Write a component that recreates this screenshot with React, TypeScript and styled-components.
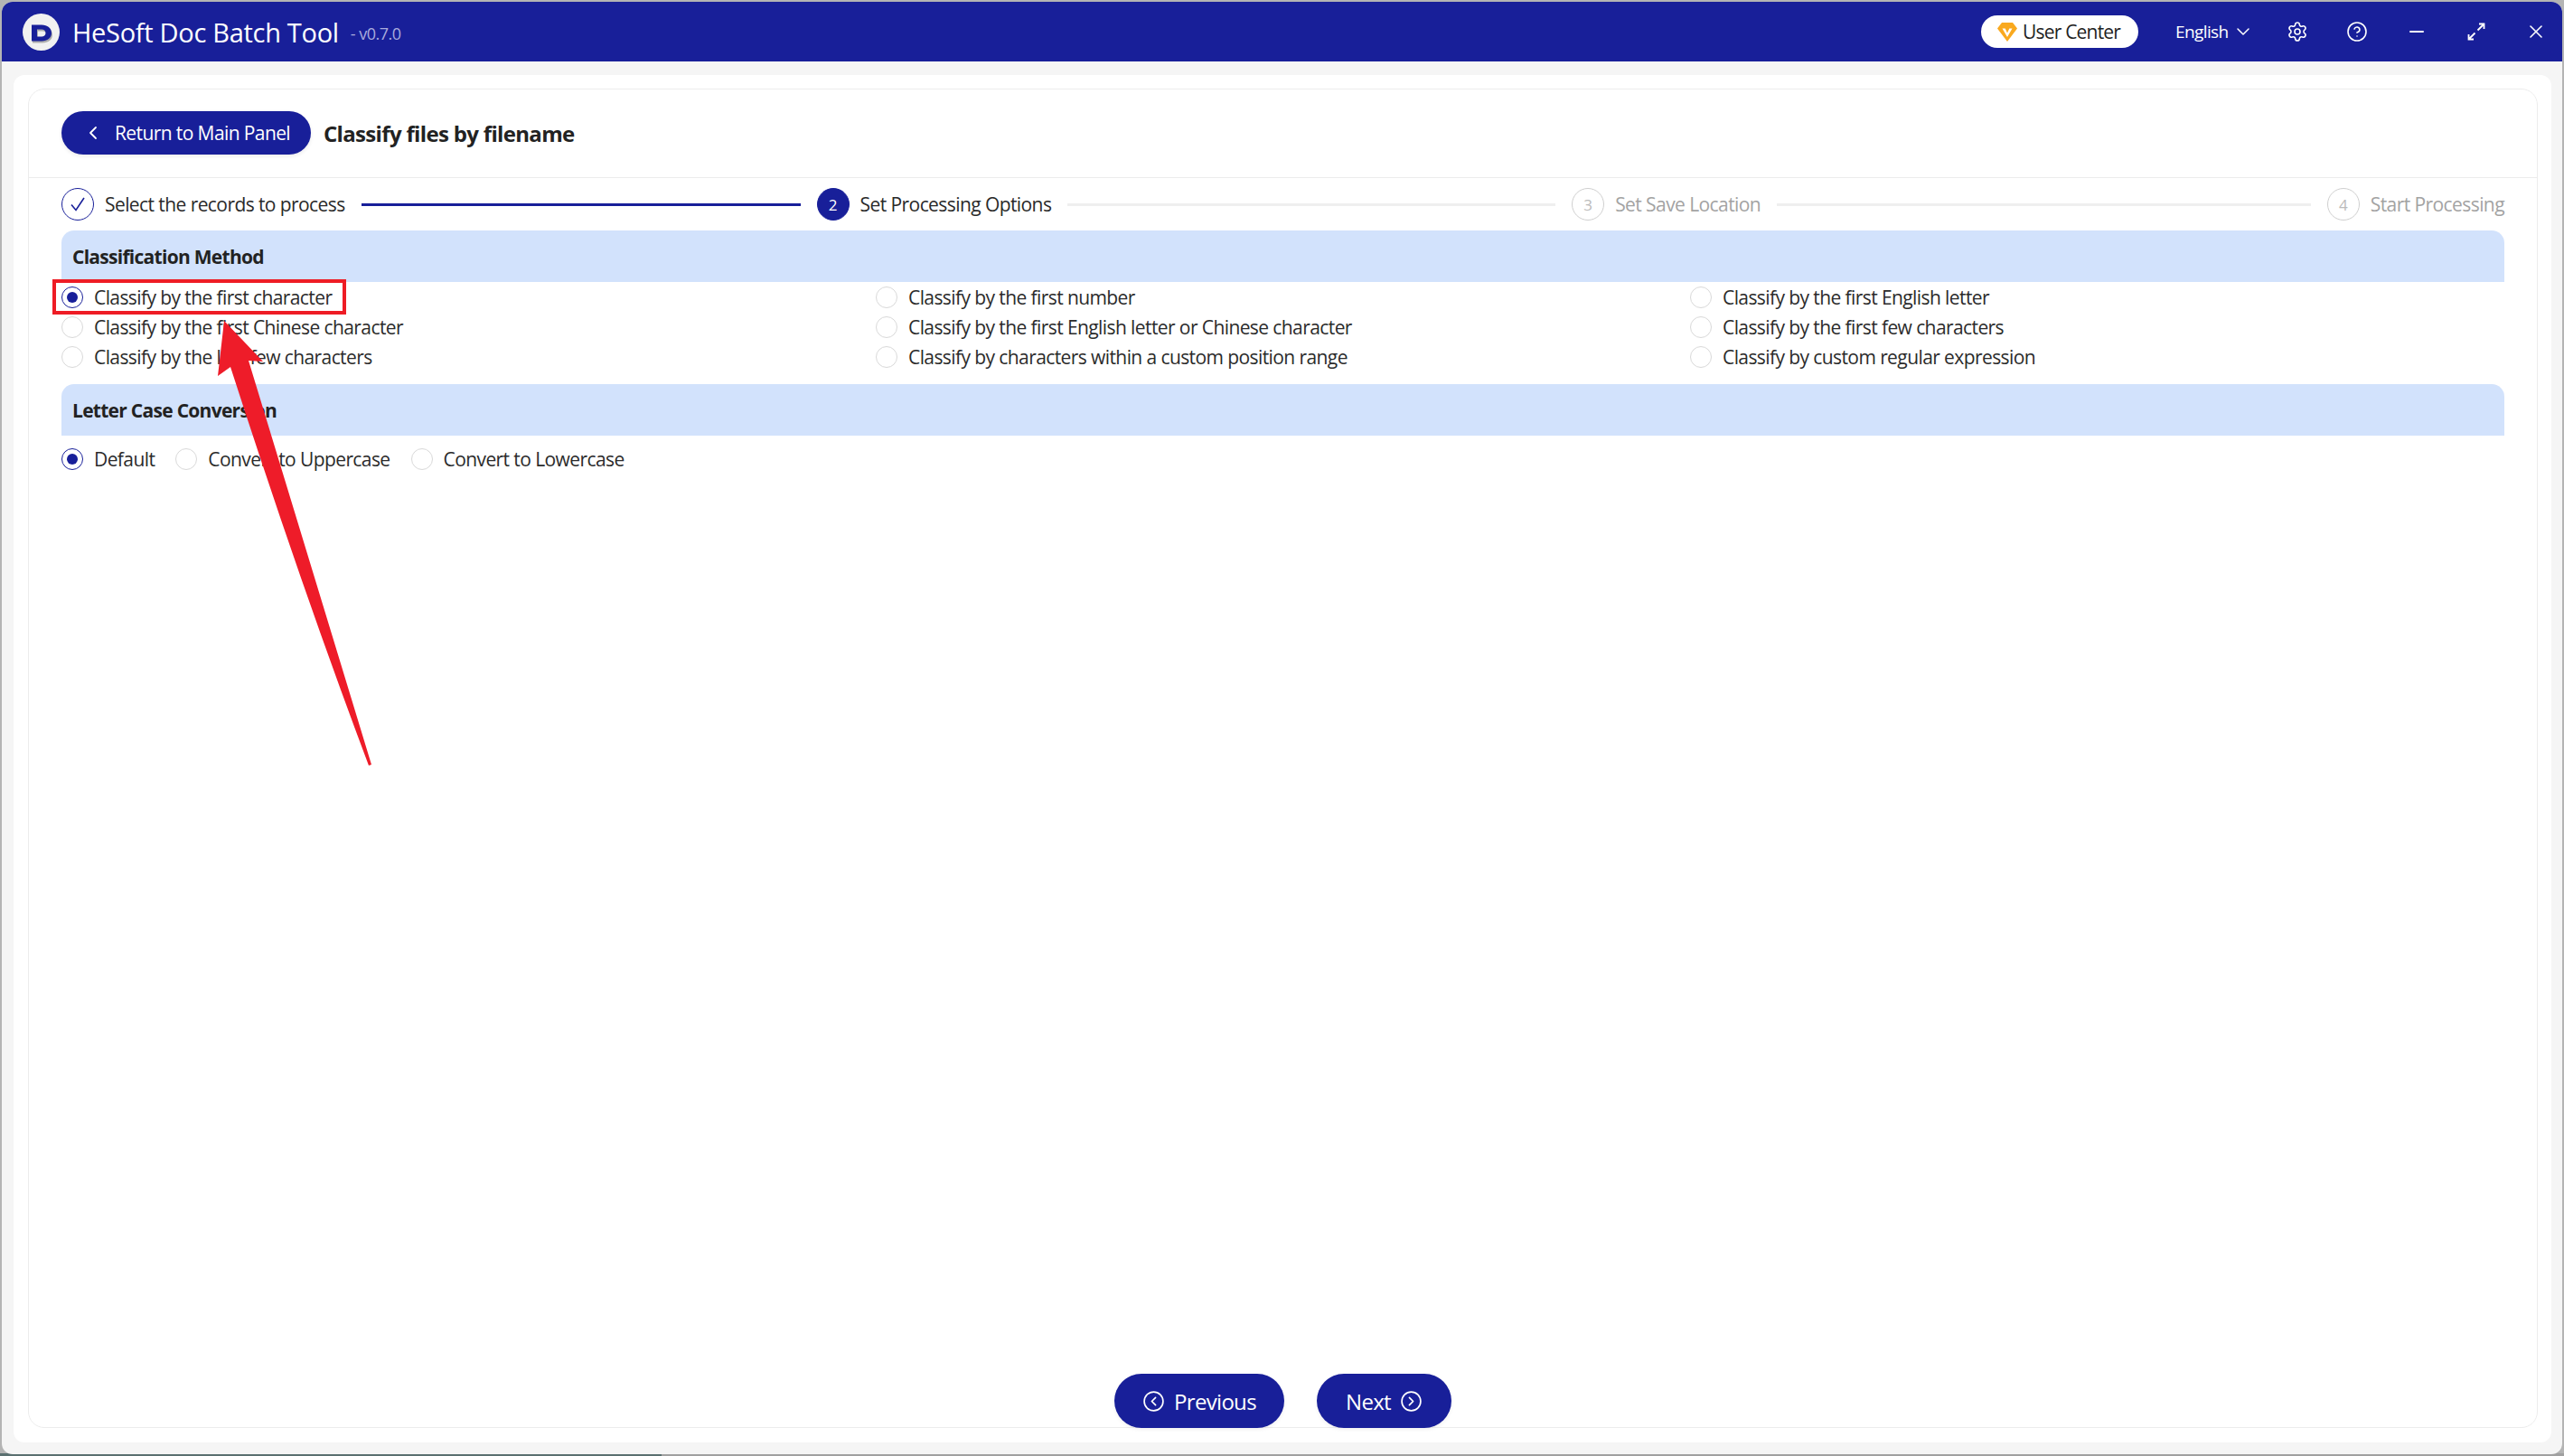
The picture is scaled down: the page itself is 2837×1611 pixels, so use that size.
import React from 'react';
import styled, { createGlobalStyle } from 'styled-components';
import { ChevronLeft, ChevronDown, CircleChevronLeft, CircleChevronRight, CircleHelp, Settings, X, Minus } from 'lucide-react';

const NAVY = '#181f99';
const FONT = '"Open Sans", "Noto Sans", sans-serif';

const GlobalStyle = createGlobalStyle`
  html, body {
    margin: 0;
    padding: 0;
    width: 2837px;
    height: 1611px;
    overflow: hidden;
  }
  body {
    font-family: ${FONT};
    color: #222;
    background: linear-gradient(to right, #5a7070 732px, #a0a0a0 732px) 0 100% / 100% 3px no-repeat, #b4b4b4;
  }
`;

const S = {
  Window: styled.div`
    position: relative;
    box-sizing: border-box;
    margin: 2px 2px 0;
    width: 2833px;
    height: 1607px;
    background: #f5f5f5;
    border-radius: 12px;
    overflow: hidden;
    display: flex;
    flex-direction: column;
  `,
  TitleBar: styled.header`
    flex: none;
    height: 66px;
    background: ${NAVY};
    color: #fff;
    display: flex;
    align-items: center;
    padding: 0 17px 0 23px;
  `,
  Logo: styled.svg`
    width: 41px;
    height: 41px;
    flex: none;
    margin-right: 14px;
  `,
  AppName: styled.span`
    font-size: 29px;
    letter-spacing: -0.3px;
    white-space: nowrap;
  `,
  Version: styled.span`
    font-size: 18px;
    letter-spacing: -0.5px;
    color: #a9abdc;
    margin-left: 13px;
    margin-top: 3px;
  `,
  TitleRight: styled.div`
    margin-left: auto;
    display: flex;
    align-items: center;
  `,
  UserCenter: styled.button`
    box-sizing: border-box;
    width: 174px;
    height: 36px;
    border: 0;
    border-radius: 18px;
    background: #fff;
    color: #222;
    font: 21px ${FONT};
    letter-spacing: -0.8px;
    display: flex;
    align-items: center;
    padding: 0 0 0 18px;
    gap: 6px;
  `,
  Language: styled.span`
    margin-left: 41px;
    font-size: 19px;
    letter-spacing: -0.6px;
    width: 63px;
  `,
  IconSlot: styled.span<{ $gap?: number }>`
    display: flex;
    align-items: center;
    justify-content: center;
    width: 24px;
    height: 24px;
    margin-left: ${(p) => p.$gap ?? 42}px;
    color: #fff;
  `,
  Body: styled.main`
    flex: 1;
    min-height: 0;
    display: flex;
    padding: 15px 13px 13px;
  `,
  Panel: styled.div`
    flex: 1;
    display: flex;
    background: #fff;
    border-radius: 12px;
    padding: 15px 15px 16px 16px;
  `,
  Card: styled.div`
    flex: 1;
    box-sizing: border-box;
    border: 1px solid #ececec;
    border-radius: 18px;
    display: flex;
    flex-direction: column;
  `,
  TopBar: styled.div`
    flex: none;
    height: 97px;
    border-bottom: 1px solid #ececec;
    display: flex;
    align-items: center;
    padding: 0 36px 0 36px;
    gap: 14px;
  `,
  BackButton: styled.button`
    box-sizing: border-box;
    width: 276px;
    height: 48px;
    margin-top: -1px;
    border: 0;
    border-radius: 24px;
    background: ${NAVY};
    color: #fff;
    font: 21px ${FONT};
    letter-spacing: -0.6px;
    display: flex;
    align-items: center;
    padding: 0 0 0 23px;
    gap: 12px;
    box-shadow: 0 2px 4px rgba(0, 0, 0, 0.08);
  `,
  PageTitle: styled.h1`
    margin: 0;
    font-size: 24px;
    font-weight: 700;
    letter-spacing: -0.67px;
    color: #222;
  `,
  Steps: styled.nav`
    flex: none;
    height: 58px;
    display: flex;
    align-items: center;
    padding: 0 36px;
  `,
  Step: styled.div<{ $last?: boolean }>`
    flex: ${(p) => (p.$last ? 'none' : '1 1 0')};
    display: flex;
    align-items: center;
    min-width: ${(p) => (p.$last ? 'auto' : '0')};
  `,
  StepCircle: styled.span<{ $state: 'done' | 'active' | 'todo' }>`
    flex: none;
    box-sizing: border-box;
    width: 36px;
    height: 36px;
    border-radius: 50%;
    display: flex;
    align-items: center;
    justify-content: center;
    font-size: 17px;
    border: 1.5px solid ${(p) => (p.$state === 'todo' ? '#cfcfcf' : NAVY)};
    background: ${(p) => (p.$state === 'active' ? NAVY : '#fff')};
    color: ${(p) => (p.$state === 'active' ? '#fff' : p.$state === 'todo' ? '#bbb' : NAVY)};
  `,
  StepLabel: styled.span<{ $muted?: boolean }>`
    margin-left: 12px;
    font-size: 21px;
    letter-spacing: -0.58px;
    white-space: nowrap;
    color: ${(p) => (p.$muted ? '#a3a3a3' : '#2a2a2a')};
  `,
  StepLine: styled.span<{ $done?: boolean }>`
    flex: 1;
    height: 3px;
    margin: 0 18px;
    background: ${(p) => (p.$done ? NAVY : '#efefef')};
  `,
  SectionHead: styled.h2`
    margin: 0 36px 0 36px;
    height: 57px;
    box-sizing: border-box;
    padding: 0 12px;
    display: flex;
    align-items: center;
    background: #d2e2fc;
    border-radius: 14px 14px 0 0;
    font-size: 21px;
    font-weight: 700;
    letter-spacing: -0.72px;
    color: #222;
  `,
  OptionGrid: styled.div`
    margin: 0 36px 14px;
    display: grid;
    grid-template-columns: repeat(3, 901px);
    grid-auto-rows: 33px;
  `,
  OptionRow: styled.div`
    margin: 9px 36px 0;
    display: flex;
    height: 33px;
    gap: 23px;
  `,
  Option: styled.label`
    display: flex;
    align-items: center;
    gap: 12px;
    font-size: 21px;
    letter-spacing: -0.59px;
    color: #2b2b2b;
    white-space: nowrap;
  `,
  Radio: styled.span<{ $on?: boolean }>`
    flex: none;
    box-sizing: border-box;
    width: 24px;
    height: 24px;
    border-radius: 50%;
    background: #fff;
    border: 1.5px solid ${(p) => (p.$on ? NAVY : '#d9d9d9')};
    display: flex;
    align-items: center;
    justify-content: center;
    &::after {
      content: '';
      display: ${(p) => (p.$on ? 'block' : 'none')};
      width: 12px;
      height: 12px;
      border-radius: 50%;
      background: ${NAVY};
    }
  `,
  Footer: styled.footer`
    margin-top: auto;
    margin-bottom: -1px;
    display: flex;
    justify-content: center;
    gap: 36px;
    padding-right: 0;
  `,
  NavButton: styled.button<{ $w: number }>`
    box-sizing: border-box;
    width: ${(p) => p.$w}px;
    height: 60px;
    border: 0;
    border-radius: 30px;
    background: ${NAVY};
    color: #fff;
    font: 24px ${FONT};
    letter-spacing: -0.7px;
    display: flex;
    align-items: center;
    justify-content: center;
    gap: 10px;
    box-shadow: 0 2px 4px rgba(0, 0, 0, 0.06);
  `,
  Highlight: styled.div`
    position: absolute;
    left: 56px;
    top: 307px;
    width: 325px;
    height: 39px;
    box-sizing: border-box;
    border: 4px solid #ee1c25;
    pointer-events: none;
  `,
  Arrow: styled.svg`
    position: absolute;
    left: 0;
    top: 0;
    width: 500px;
    height: 860px;
    pointer-events: none;
  `,
};

const methods = [
  'Classify by the first character',
  'Classify by the first number',
  'Classify by the first English letter',
  'Classify by the first Chinese character',
  'Classify by the first English letter or Chinese character',
  'Classify by the first few characters',
  'Classify by the last few characters',
  'Classify by characters within a custom position range',
  'Classify by custom regular expression',
];

const cases = ['Default', 'Convert to Uppercase', 'Convert to Lowercase'];

const LogoMark = () => (
  <S.Logo viewBox="0 0 41 41">
    <circle cx="20.5" cy="20.5" r="20.5" fill="#f1f1f1" />
    <path
      fillRule="evenodd"
      d="M11 14.500h11c6.500 0 11 3.500 11 9s-4.500 9-11 9h-11zM17 19.500v8h5c2.500 0 4.500-1.500 4.500-4s-2-4-4.500-4z"
      fill="#adadad"
    />
    <path
      fillRule="evenodd"
      d="M10 12.500h11c6.500 0 11 3.500 11 9s-4.500 9-11 9h-11zM16 17.500v8h5c2.500 0 4.500-1.500 4.500-4s-2-4-4.500-4z"
      fill={NAVY}
    />
  </S.Logo>
);

const GemIcon = () => (
  <svg width="22" height="24" viewBox="0 0 22 24">
    <path d="M5 2h12l5 6.500L11 23 0 8.500z" fill="#f9a91f" />
    <path d="M5.500 8.500h3.200L11 13.500l2.300-5h3.200L11 18z" fill="#fff" />
  </svg>
);

const ExpandIcon = () => (
  <svg width="20" height="20" viewBox="0 0 20 20" fill="none" stroke="#fff" strokeWidth="1.8">
    <path d="M11.500 8.500L18 2M13 1.500h5.500V7" />
    <path d="M8.500 11.500L2 18M7 18.500H1.500V13" />
  </svg>
);

const CheckIcon = () => (
  <svg width="20" height="18" viewBox="0 0 20 18" fill="none" stroke={NAVY} strokeWidth="1.6">
    <path d="M3 9.500l5 6L17 2" />
  </svg>
);

const Annotation = () => (
  <>
    <S.Highlight />
    <S.Arrow viewBox="0 0 500 860">
      {/* window is offset 2px from the page */}
      <path
        transform="translate(-2 -2)"
        d="M248 355L291 400L275 399L411 846L408 847Q332 645 255 406L241 416Z"
        fill="#ee1c29"
      />
    </S.Arrow>
  </>
);

export default function App() {
  return (
    <>
      <GlobalStyle />
      <S.Window>
        <S.TitleBar>
          <LogoMark />
          <S.AppName>HeSoft Doc Batch Tool</S.AppName>
          <S.Version>- v0.7.0</S.Version>
          <S.TitleRight>
            <S.UserCenter>
              <GemIcon />
              User Center
            </S.UserCenter>
            <S.Language>English</S.Language>
            <ChevronDown size={24} strokeWidth={1.5} color="#fff" />
            <S.IconSlot $gap={36}>
              <Settings size={24} strokeWidth={1.6} />
            </S.IconSlot>
            <S.IconSlot>
              <CircleHelp size={24} strokeWidth={1.6} />
            </S.IconSlot>
            <S.IconSlot>
              <Minus size={24} strokeWidth={2} />
            </S.IconSlot>
            <S.IconSlot>
              <ExpandIcon />
            </S.IconSlot>
            <S.IconSlot>
              <X size={26} strokeWidth={1.6} />
            </S.IconSlot>
          </S.TitleRight>
        </S.TitleBar>
        <S.Body>
          <S.Panel>
            <S.Card>
              <S.TopBar>
                <S.BackButton>
                  <ChevronLeft size={24} strokeWidth={1.8} />
                  Return to Main Panel
                </S.BackButton>
                <S.PageTitle>Classify files by filename</S.PageTitle>
              </S.TopBar>
              <S.Steps>
                <S.Step>
                  <S.StepCircle $state="done">
                    <CheckIcon />
                  </S.StepCircle>
                  <S.StepLabel>Select the records to process</S.StepLabel>
                  <S.StepLine $done />
                </S.Step>
                <S.Step>
                  <S.StepCircle $state="active">2</S.StepCircle>
                  <S.StepLabel>Set Processing Options</S.StepLabel>
                  <S.StepLine />
                </S.Step>
                <S.Step>
                  <S.StepCircle $state="todo">3</S.StepCircle>
                  <S.StepLabel $muted>Set Save Location</S.StepLabel>
                  <S.StepLine />
                </S.Step>
                <S.Step $last>
                  <S.StepCircle $state="todo">4</S.StepCircle>
                  <S.StepLabel $muted>Start Processing</S.StepLabel>
                </S.Step>
              </S.Steps>
              <S.SectionHead>Classification Method</S.SectionHead>
              <S.OptionGrid>
                {methods.map((m, i) => (
                  <S.Option key={m}>
                    <S.Radio $on={i === 0} />
                    {m}
                  </S.Option>
                ))}
              </S.OptionGrid>
              <S.SectionHead>Letter Case Conversion</S.SectionHead>
              <S.OptionRow>
                {cases.map((c, i) => (
                  <S.Option key={c}>
                    <S.Radio $on={i === 0} />
                    {c}
                  </S.Option>
                ))}
              </S.OptionRow>
              <S.Footer>
                <S.NavButton $w={188}>
                  <CircleChevronLeft size={25} strokeWidth={1.6} />
                  Previous
                </S.NavButton>
                <S.NavButton $w={149}>
                  Next
                  <CircleChevronRight size={25} strokeWidth={1.6} />
                </S.NavButton>
              </S.Footer>
            </S.Card>
          </S.Panel>
        </S.Body>
        <Annotation />
      </S.Window>
    </>
  );
}
